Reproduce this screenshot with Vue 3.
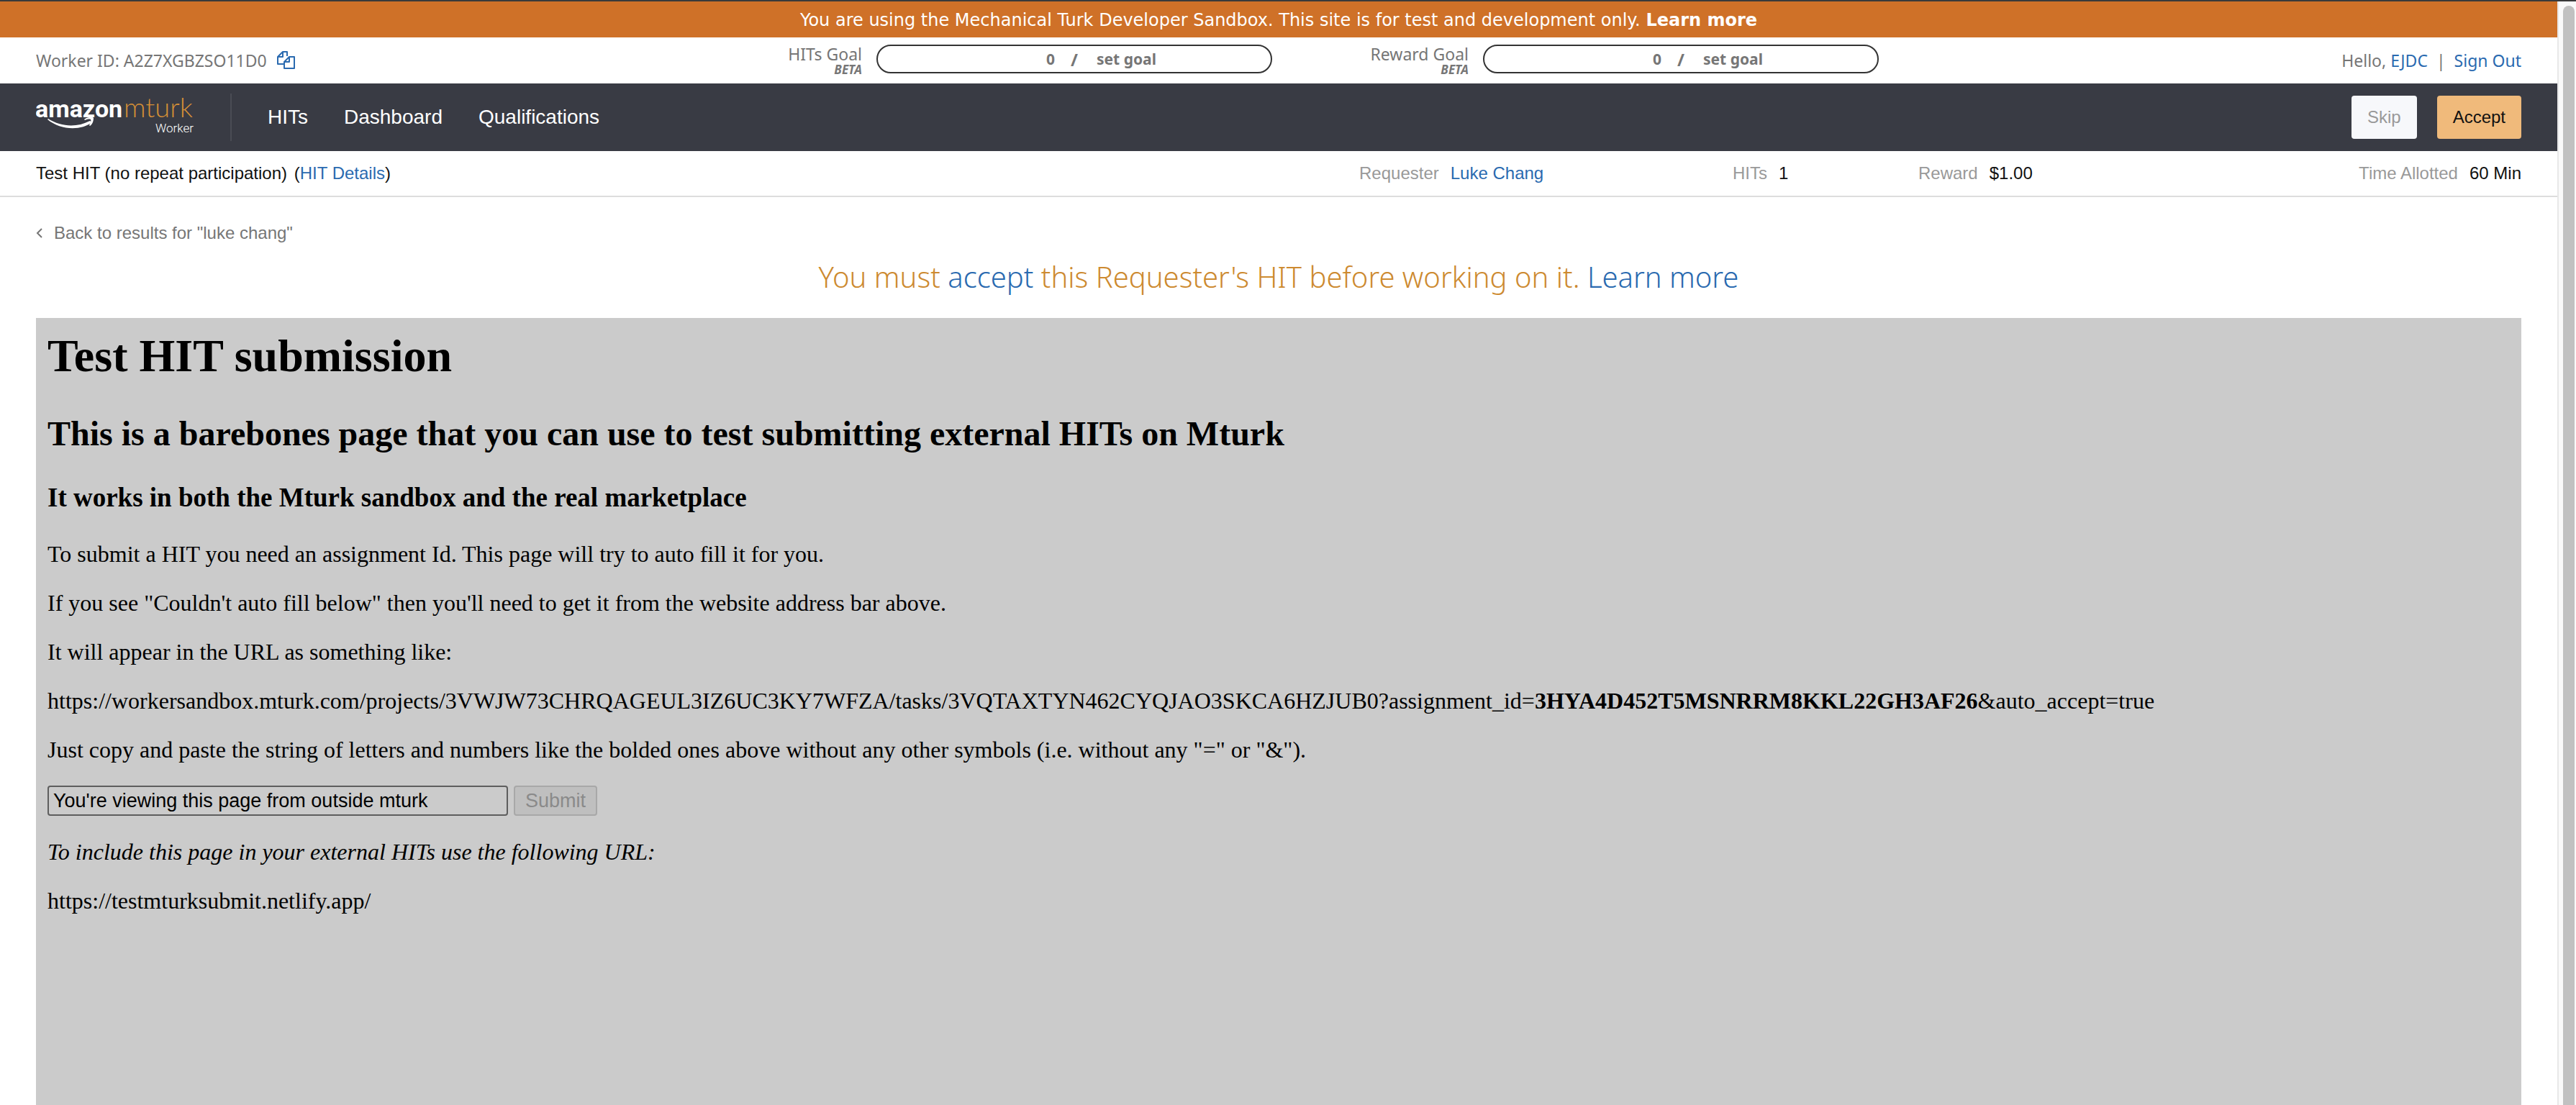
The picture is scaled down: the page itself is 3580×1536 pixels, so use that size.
<script setup>
import { ref } from 'vue'

const assignmentId = ref("You're viewing this page from outside mturk")
const goals = [
  { id: 'hits', label: 'HITs Goal' },
  { id: 'reward', label: 'Reward Goal' },
]
const nav = ['HITs', 'Dashboard', 'Qualifications']
</script>

<template>
  <div class="window">
    <div class="page">
      <div class="banner">
        You are using the Mechanical Turk Developer Sandbox. This site is for test and development only.
        <a href="#">Learn more</a>
      </div>

      <div class="account">
        <div class="worker">
          <span>Worker ID: A2Z7XGBZSO11D0</span>
          <a href="#" aria-label="Copy worker ID">
            <svg width="26" height="26" viewBox="0 0 26 26" fill="none" stroke="currentColor" stroke-width="2" stroke-linejoin="round">
              <path d="M9 18H1V8L8 1H14V7" />
              <path d="M8 1V8H1" />
              <path d="M17 8H24V24H10V15Z" />
              <path d="M17 8V15H10" />
            </svg>
          </a>
        </div>
        <div v-for="goal in goals" :key="goal.id" class="goal" :class="goal.id">
          <div class="goal-label">
            {{ goal.label }}
            <em>BETA</em>
          </div>
          <button class="goal-bar" type="button">
            <span class="count">0</span>
            <span class="slash">/</span>
            <span class="target">set goal</span>
          </button>
        </div>
        <div class="hello">Hello, <a href="#">EJDC</a><span class="bar">|</span><a href="#">Sign Out</a></div>
      </div>

      <header class="navbar">
        <a href="#" class="brand" aria-label="Amazon MTurk Worker">
          <svg width="222" height="86" viewBox="0 -10 222 86">
            <text class="amazon" x="-1" y="33">amazon</text>
            <text class="mturk" x="122" y="33">mturk</text>
            <text class="worker-word" x="219" y="54" text-anchor="end">Worker</text>
            <path fill="#fff" d="M17 35C34 46 56 48 75 38L78 40C62 52 34 51 16 36Z" />
            <path fill="#fff" d="M67 36C72 32 79 32 80 34C80 39 78 43 75 45L74 44C76 41 77 38 76 36C74 35 70 36 68 37Z" />
          </svg>
        </a>
        <nav>
          <a v-for="item in nav" :key="item" href="#">{{ item }}</a>
        </nav>
        <div class="actions">
          <button type="button" class="skip">Skip</button>
          <button type="button" class="accept">Accept</button>
        </div>
      </header>

      <div class="details">
        <div class="title">Test HIT (no repeat participation) <span>(<a href="#">HIT Details</a>)</span></div>
        <dl>
          <div><dt>Requester</dt><dd><a href="#">Luke Chang</a></dd></div>
          <div><dt>HITs</dt><dd>1</dd></div>
          <div><dt>Reward</dt><dd>$1.00</dd></div>
          <div><dt>Time Allotted</dt><dd>60 Min</dd></div>
        </dl>
      </div>

      <main>
        <a href="#" class="back">
          <svg width="10" height="16" viewBox="0 0 10 16" fill="none" stroke="currentColor" stroke-width="2">
            <path d="M8 2L2 8L8 14" />
          </svg>
          Back to results for "luke chang"
        </a>
        <div class="notice">
          You must <a href="#">accept</a> this Requester's HIT before working on it. <a href="#">Learn more</a>
        </div>

        <section class="task">
          <h1>Test HIT submission</h1>
          <h2>This is a barebones page that you can use to test submitting external HITs on Mturk</h2>
          <h3>It works in both the Mturk sandbox and the real marketplace</h3>
          <p>To submit a HIT you need an assignment Id. This page will try to auto fill it for you.</p>
          <p>If you see "Couldn't auto fill below" then you'll need to get it from the website address bar above.</p>
          <p>It will appear in the URL as something like:</p>
          <p>https://workersandbox.mturk.com/projects/3VWJW73CHRQAGEUL3IZ6UC3KY7WFZA/tasks/3VQTAXTYN462CYQJAO3SKCA6HZJUB0?assignment_id=<b>3HYA4D452T5MSNRRM8KKL22GH3AF26</b>&amp;auto_accept=true</p>
          <p>Just copy and paste the string of letters and numbers like the bolded ones above without any other symbols (i.e. without any "=" or "&amp;").</p>
          <form @submit.prevent>
            <input v-model="assignmentId" type="text" aria-label="Assignment Id" />
            <button type="submit" disabled>Submit</button>
          </form>
          <p><i>To include this page in your external HITs use the following URL:</i></p>
          <p>https://testmturksubmit.netlify.app/</p>
        </section>
      </main>
    </div>
    <div class="scroll-track"><div class="scroll-thumb"></div></div>
  </div>
</template>

<style>
body {
  margin: 0;
}
</style>

<style scoped>
* {
  box-sizing: border-box;
}
.window {
  display: flex;
  min-height: 100vh;
  border-top: 2px solid #3a3a3a;
  background: #fff;
  font-family: "Liberation Sans", Arial, sans-serif;
  font-size: 24px;
  line-height: 32px;
  color: #111;
}
a {
  color: #2a6ab0;
  text-decoration: none;
}
button,
input {
  font-family: inherit;
  font-size: 24px;
}
.page {
  flex: 1;
  min-width: 0;
  display: flex;
  flex-direction: column;
}
.scroll-track {
  width: 26px;
  padding: 6px 2px 0 6px;
  border-left: 2px solid #e8e8e8;
  background: #fafafa;
  display: flex;
}
.scroll-thumb {
  flex: 1;
  border-radius: 8px 8px 0 0;
  background: #c1c1c1;
}

.banner {
  height: 50px;
  line-height: 52px;
  background: #cf7128;
  color: #fff;
  font-family: "DejaVu Sans", Verdana, sans-serif;
  text-align: center;
}
.banner a {
  color: #fff;
  font-weight: 700;
}

.account {
  height: 64px;
  padding: 0 50px;
  display: grid;
  grid-template-columns: 988fr 730fr 113fr 730fr 893fr;
  align-items: center;
  font-family: "Noto Sans", "Open Sans", sans-serif;
  font-size: 23px;
  color: #767676;
}
.worker {
  display: flex;
  align-items: center;
  gap: 14px;
}
.worker svg {
  display: block;
}
.goal {
  display: flex;
  align-items: center;
  gap: 20px;
}
.goal.reward {
  grid-column: 4;
}
.goal-label {
  width: 160px;
  text-align: right;
  line-height: 26px;
}
.goal-label em {
  display: block;
  font-size: 17px;
  font-weight: 700;
  line-height: 18px;
}
.goal-bar {
  flex: 1;
  height: 40px;
  margin-bottom: 4px;
  padding: 0;
  display: grid;
  grid-template-columns: 246fr 58fr 242fr;
  align-items: center;
  border: 2px solid #333;
  border-radius: 20px;
  background: #fff;
  color: #767676;
  font-size: 21px;
  font-weight: 700;
}
.count {
  text-align: right;
}
.slash {
  padding-left: 22px;
  font-size: 24px;
  text-align: left;
}
.target {
  text-align: left;
}
.hello {
  text-align: right;
}
.bar {
  margin: 0 12px;
}

.navbar {
  height: 94px;
  padding: 0 50px;
  display: flex;
  align-items: center;
  background: #393b44;
}
.brand {
  width: 272px;
  height: 66px;
  display: flex;
  align-items: center;
  border-right: 2px solid #4a4c54;
}
.brand svg {
  flex: none;
}
.amazon {
  font: 700 34px Roboto, sans-serif;
  fill: #fff;
}
.mturk {
  font: 300 38px Lato, sans-serif;
  fill: #d58f36;
}
.worker-word {
  font: 300 17px Roboto, sans-serif;
  fill: #fff;
}
nav {
  padding-left: 50px;
  display: flex;
  gap: 50px;
  font-size: 28px;
}
nav a {
  color: #fff;
}
.actions {
  margin-left: auto;
  display: flex;
  gap: 28px;
}
.actions button {
  height: 60px;
  padding: 0 22px;
  border: 0;
  border-radius: 4px;
}
.actions .skip {
  background: #f7f8fb;
  color: #999;
}
.actions .accept {
  background: #f0ba7b;
  color: #111;
}

.details {
  height: 64px;
  padding: 0 50px;
  display: flex;
  align-items: center;
  border-bottom: 2px solid #ddd;
}
.title {
  flex: 1839;
}
.title span {
  padding-left: 3px;
}
dl {
  flex: 1615;
  margin: 0;
  display: grid;
  grid-template-columns: 519fr 258fr 419fr 419fr;
}
dl div {
  display: flex;
  gap: 16px;
}
dl div:last-child {
  justify-content: flex-end;
}
dt {
  color: #999;
}
dd {
  margin: 0;
}

main {
  flex: 1;
  padding: 34px 50px 0;
  display: flex;
  flex-direction: column;
}
.back {
  display: flex;
  align-items: center;
  gap: 15px;
  color: #767676;
}
.notice {
  padding: 16px 0 28px;
  font: 300 40px/58px "Noto Sans", "Open Sans", sans-serif;
  color: #cd8a30;
  text-align: center;
}
.task {
  flex: 1;
  padding: 16px;
  background: #cbcbcb;
  color: #000;
  font-family: "Liberation Serif", "Times New Roman", serif;
  font-size: 32px;
  line-height: 36px;
}
h1 {
  margin: 0 0 43px;
  font-size: 64px;
  line-height: 74px;
}
h2 {
  margin: 0 0 40px;
  font-size: 48px;
  line-height: 55px;
}
h3 {
  margin: 0 0 38px;
  font-size: 37px;
  line-height: 44px;
}
p {
  margin: 0 0 32px;
}
form {
  margin-bottom: 32px;
  display: flex;
  gap: 8px;
}
form input {
  width: 640px;
  height: 42px;
  padding: 0 6px;
  border: 2px solid #5e5e5e;
  border-radius: 4px;
  background: #cbcbcb;
  color: #000;
  font-family: "Liberation Sans", Arial, sans-serif;
  font-size: 27px;
}
form button {
  height: 42px;
  padding: 0 14px;
  border: 2px solid #a8a8a8;
  border-radius: 4px;
  background: #bfbfbf;
  color: #8a8a8a;
  font-family: "Liberation Sans", Arial, sans-serif;
  font-size: 27px;
}
</style>
